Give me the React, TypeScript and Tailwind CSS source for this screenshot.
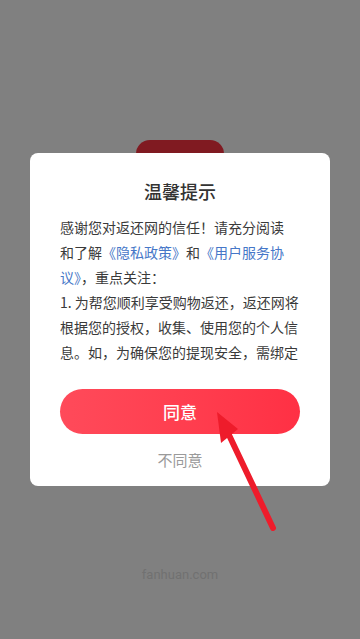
export default function App() {
  return (
    <div
      className="relative flex h-[639px] w-[360px] flex-col overflow-hidden bg-[#808080]"
      style={{ fontFamily: '"Noto Sans CJK SC", "Noto Sans", sans-serif' }}
    >
      {/* page content behind the dimmed overlay */}
      <div className="absolute left-[136px] top-[140px] h-[40px] w-[88px] rounded-t-[14px] bg-[#801a21]" />

      {/* dialog */}
      <div className="relative mx-[30px] mt-[153px] rounded-[8px] bg-white px-[30px] pt-[25px] pb-[16px]">
        <h2 className="text-center text-[18px] font-medium leading-[26px] text-[#333333]">
          温馨提示
        </h2>
        <div className="mt-[11px] h-[150px] overflow-hidden text-[14px] leading-[25px] text-[#3a3a3a]">
          <p>
            感谢您对返还网的信任！请充分阅读
            <br />
            和了解<span className="text-[#4677c8]">《隐私政策》</span>和
            <span className="text-[#4677c8]">《用户服务协议》</span>，重点关注：
          </p>
          <p>
            1. 为帮您顺利享受购物返还，返还网将根据您的授权，收集、使用您的个人信息。如，为确保您的提现安全，需绑定
          </p>
        </div>
        <button className="mt-[24px] flex h-[45px] w-full items-center justify-center rounded-full bg-gradient-to-r from-[#ff4a5a] to-[#ff3044] text-[17px] font-medium text-white">
          同意
        </button>
        <p className="mt-[16px] text-center text-[15px] leading-[20px] text-[#9a9a9a]">
          不同意
        </p>
      </div>

      <p
        className="mt-[80px] text-center text-[13px] leading-[18px] text-[#717171]"
        style={{ fontFamily: 'Roboto, "Noto Sans", sans-serif' }}
      >
        fanhuan.com
      </p>

      {/* annotation arrow */}
      <svg
        className="pointer-events-none absolute left-0 top-0"
        width="360"
        height="639"
        viewBox="0 0 360 639"
      >
        <line
          x1="273"
          y1="528"
          x2="229"
          y2="435"
          stroke="#ee1c2b"
          strokeWidth="6"
          strokeLinecap="round"
        />
        <polygon points="217,412 221,443 238,429" fill="#ee1c2b" />
      </svg>
    </div>
  );
}
